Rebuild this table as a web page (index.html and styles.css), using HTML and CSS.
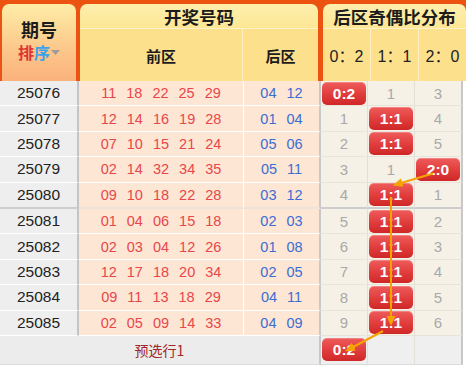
FILE: index.html
```html
<!DOCTYPE html>
<html>
<head>
<meta charset="utf-8">
<link rel="stylesheet" href="styles.css">
</head>
<body>
<div class="chart">
  <div class="head">
    <div class="tab tab-qh">
      <div class="qh-title">期号</div>
      <div class="sort"><span class="s1">排</span><span class="s2">序</span><svg class="tri" width="9" height="6" viewBox="0 0 9 6"><path d="M0 0H9L4.5 5z" fill="#9c9c9c"/></svg></div>
    </div>
    <div class="tab tab-kj">
      <div class="tab-title">开奖号码</div>
      <div class="sub">
        <div class="sub-qq">前区</div>
        <div class="sub-hq">后区</div>
      </div>
    </div>
    <div class="tab tab-fb">
      <div class="tab-title">后区奇偶比分布</div>
      <div class="sub sub-ratio">
        <div class="r">0：2</div>
        <div class="r">1：1</div>
        <div class="r">2：0</div>
      </div>
    </div>
  </div>
  <div class="body">
    <div class="row">
      <div class="c-qh">25076</div>
      <div class="c-qq"><span>11</span><span>18</span><span>22</span><span>25</span><span>29</span></div>
      <div class="c-hq"><span>04</span><span>12</span></div>
      <div class="c-d"><span class="badge">0:2</span></div>
      <div class="c-d">1</div>
      <div class="c-d last">3</div>
    </div>
    <div class="row">
      <div class="c-qh">25077</div>
      <div class="c-qq"><span>12</span><span>14</span><span>16</span><span>19</span><span>28</span></div>
      <div class="c-hq"><span>01</span><span>04</span></div>
      <div class="c-d">1</div>
      <div class="c-d"><span class="badge">1:1</span></div>
      <div class="c-d last">4</div>
    </div>
    <div class="row">
      <div class="c-qh">25078</div>
      <div class="c-qq"><span>07</span><span>10</span><span>15</span><span>21</span><span>24</span></div>
      <div class="c-hq"><span>05</span><span>06</span></div>
      <div class="c-d">2</div>
      <div class="c-d"><span class="badge">1:1</span></div>
      <div class="c-d last">5</div>
    </div>
    <div class="row">
      <div class="c-qh">25079</div>
      <div class="c-qq"><span>02</span><span>14</span><span>32</span><span>34</span><span>35</span></div>
      <div class="c-hq"><span>05</span><span>11</span></div>
      <div class="c-d">3</div>
      <div class="c-d">1</div>
      <div class="c-d last"><span class="badge">2:0</span></div>
    </div>
    <div class="row row-sep">
      <div class="c-qh">25080</div>
      <div class="c-qq"><span>09</span><span>10</span><span>18</span><span>22</span><span>28</span></div>
      <div class="c-hq"><span>03</span><span>12</span></div>
      <div class="c-d">4</div>
      <div class="c-d"><span class="badge">1:1</span></div>
      <div class="c-d last">1</div>
    </div>
    <div class="row">
      <div class="c-qh">25081</div>
      <div class="c-qq"><span>01</span><span>04</span><span>06</span><span>15</span><span>18</span></div>
      <div class="c-hq"><span>02</span><span>03</span></div>
      <div class="c-d">5</div>
      <div class="c-d"><span class="badge">1:1</span></div>
      <div class="c-d last">2</div>
    </div>
    <div class="row">
      <div class="c-qh">25082</div>
      <div class="c-qq"><span>02</span><span>03</span><span>04</span><span>12</span><span>26</span></div>
      <div class="c-hq"><span>01</span><span>08</span></div>
      <div class="c-d">6</div>
      <div class="c-d"><span class="badge">1:1</span></div>
      <div class="c-d last">3</div>
    </div>
    <div class="row">
      <div class="c-qh">25083</div>
      <div class="c-qq"><span>12</span><span>17</span><span>18</span><span>20</span><span>34</span></div>
      <div class="c-hq"><span>02</span><span>05</span></div>
      <div class="c-d">7</div>
      <div class="c-d"><span class="badge">1:1</span></div>
      <div class="c-d last">4</div>
    </div>
    <div class="row">
      <div class="c-qh">25084</div>
      <div class="c-qq"><span>09</span><span>11</span><span>13</span><span>18</span><span>29</span></div>
      <div class="c-hq"><span>04</span><span>11</span></div>
      <div class="c-d">8</div>
      <div class="c-d"><span class="badge">1:1</span></div>
      <div class="c-d last">5</div>
    </div>
    <div class="row">
      <div class="c-qh">25085</div>
      <div class="c-qq"><span>02</span><span>05</span><span>09</span><span>14</span><span>33</span></div>
      <div class="c-hq"><span>04</span><span>09</span></div>
      <div class="c-d">9</div>
      <div class="c-d"><span class="badge">1:1</span></div>
      <div class="c-d last">6</div>
    </div>
    <div class="row row-pre">
      <div class="c-pre">预选行1</div>
      <div class="c-d"><span class="badge">0:2</span></div>
      <div class="c-d"></div>
      <div class="c-d last"></div>
    </div>
  </div>
  <svg class="arrows" width="466" height="369" viewBox="0 0 466 369">
    <defs>
      <marker id="ah" markerWidth="10" markerHeight="9" refX="5" refY="4.5" orient="auto" markerUnits="userSpaceOnUse">
        <path d="M0 0L10 4.5L0 9z" fill="#f5a300"/>
      </marker>
    </defs>
    <line x1="433" y1="173.5" x2="397.5" y2="184" stroke="#f5a300" stroke-width="2" marker-end="url(#ah)"/>
    <line x1="391" y1="197" x2="391" y2="321" stroke="#f5a300" stroke-width="2" marker-end="url(#ah)"/>
    <line x1="383" y1="331" x2="349.5" y2="349" stroke="#f5a300" stroke-width="2" marker-end="url(#ah)"/>
  </svg>
</div>
</body>
</html>
```

FILE: styles.css
```css
* {
  box-sizing: border-box;
  margin: 0;
  padding: 0;
}

body {
  width: 466px;
  height: 369px;
  background: #ffffff;
  font-family: "Liberation Sans", "Noto Sans CJK SC", Arial, sans-serif;
  overflow: hidden;
}

.chart {
  position: relative;
  width: 466px;
}

/* ---------- header ---------- */
.head {
  display: flex;
  height: 81px;
  padding-top: 4px;
  background: #ec5210;
}

.tab {
  border-radius: 7px 7px 0 0;
  overflow: hidden;
  font-family: "Noto Sans CJK SC", sans-serif;
  color: #1c1c1c;
}

.tab-qh {
  width: 74px;
  margin-left: 2px;
  margin-right: 4px;
  background: linear-gradient(#feeda6, #fcc68a 60%, #fbb27c);
  display: flex;
  flex-direction: column;
  align-items: center;
  padding-top: 15px;
}

.qh-title {
  font-size: 18px;
  font-weight: 700;
  line-height: 20px;
}

.sort {
  margin-top: 3px;
  display: flex;
  align-items: center;
  font-size: 16px;
  font-weight: 700;
  line-height: 20px;
}

.s1 { color: #e03434; }
.s2 { color: #3aa3ea; }

.tri {
  margin-left: 1px;
  margin-top: 1px;
}

.tab-kj {
  width: 238px;
  margin-right: 5px;
  display: flex;
  flex-direction: column;
}

.tab-fb {
  width: 143px;
  display: flex;
  flex-direction: column;
}

.tab-title {
  height: 25px;
  line-height: 25px;
  text-align: center;
  font-size: 17.5px;
  font-weight: 700;
  background: linear-gradient(#feefad, #fde795);
  border-bottom: 1px solid #fff2c6;
}

.sub {
  flex: 1;
  display: flex;
  background: #fde08c;
}

.sub-qq,
.sub-hq {
  display: flex;
  align-items: center;
  justify-content: center;
  font-size: 15px;
  font-weight: 700;
}

.sub-qq {
  width: 163px;
  border-right: 1px solid #fff0c4;
}

.sub-hq {
  flex: 1;
}

.sub-ratio .r {
  width: 48px;
  display: flex;
  align-items: center;
  justify-content: center;
  font-family: "Liberation Sans", "Noto Sans CJK SC", sans-serif;
  font-size: 16px;
  font-weight: 400;
  color: #222;
  border-right: 1px solid #fff0c4;
}

.sub-ratio .r:last-child {
  flex: 1;
  border-right: none;
}

/* ---------- body ---------- */
.row {
  display: flex;
  height: 25.4px;
}

.row > div {
  display: flex;
  align-items: center;
  justify-content: center;
  border-bottom: 1px solid #ffffff;
}

.c-qh {
  width: 79px;
  background: #efeeee;
  border-right: 2px solid #c4c4c4;
  color: #222;
  font-size: 15.5px;
}

.c-qq,
.c-hq {
  background: #fee6d4;
  gap: 10px;
  font-size: 14.5px;
}

.c-qq {
  width: 165px;
  border-right: 1px solid #ffffff;
  color: #e8474a;
}

.c-hq {
  width: 77px;
  border-right: 2px solid #c8c8c8;
  color: #3b6dd2;
}

.c-d {
  width: 47px;
  background: #f6f1e7;
  border-right: 1px solid #e4dfd6;
  color: #a9a9a9;
  font-size: 15px;
}

.row > .c-d {
  border-bottom-color: #e9e4db;
}

.c-d.last {
  width: 48px;
  border-right: 2px solid #c8c8c8;
}

.row-sep {
  height: 26.4px;
}

.row-sep > div,
.row-sep > .c-d {
  border-bottom: 2px solid #cdcdcd;
}

.row-sep > .c-qq,
.row-sep > .c-hq {
  border-bottom-color: #ebe3dc;
}

.row-pre {
  height: 29px;
}

.c-pre {
  width: 321px;
  background: #ececec;
  border-right: 2px solid #c8c8c8;
  color: #a32626;
  font-family: "Noto Sans CJK SC", sans-serif;
  font-size: 14px;
}

.row-pre > .c-d {
  background: #efefef;
  border-bottom: 1px solid #dcdcdc;
}

.row-pre > .c-pre {
  border-bottom: 1px solid #dcdcdc;
}

.badge {
  display: block;
  width: 44px;
  height: 23px;
  line-height: 23px;
  text-align: center;
  border-radius: 5px;
  background: linear-gradient(#ef5b5b, #e03c3c 55%, #cf2727);
  box-shadow: inset 0 1px 0 rgba(255, 255, 255, 0.25);
  color: #ffffff;
  font-weight: 700;
  font-size: 15.5px;
  position: relative;
  z-index: 1;
}

.arrows {
  position: absolute;
  left: 0;
  top: 0;
  pointer-events: none;
  z-index: 2;
}
```
